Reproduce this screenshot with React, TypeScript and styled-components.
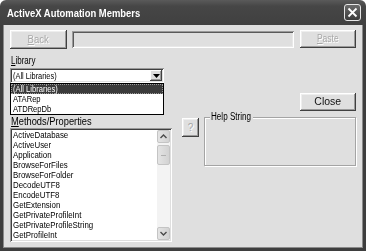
import React from 'react';
import styled, { createGlobalStyle } from 'styled-components';

const GlobalStyle = createGlobalStyle`
  html, body {
    margin: 0;
    padding: 0;
    background: #ffffff;
  }
  body {
    font-family: "Liberation Sans", Arial, sans-serif;
    font-size: 10px;
    color: #000;
  }
  * {
    box-sizing: border-box;
  }
`;

// the dialog font is a narrow bitmap face; squeeze Liberation Sans to its widths
const Txt = styled.span<{ $sx?: number; $origin?: string }>`
  display: inline-block;
  white-space: nowrap;
  transform: scaleX(${(p) => p.$sx ?? 1});
  transform-origin: ${(p) => p.$origin ?? 'left center'};
`;

const Window = styled.div`
  width: 366px;
  height: 251px;
  display: flex;
  flex-direction: column;
  overflow: hidden;
`;

const TitleBar = styled.div`
  height: 25px;
  flex: none;
  display: flex;
  align-items: center;
  justify-content: space-between;
  padding: 0 5px 0 7px;
  background: linear-gradient(#5a5a5a 0%, #464646 25%, #404040 100%);
  border-radius: 6px 6px 0 0;
`;

const Title = styled.span`
  font-weight: bold;
  font-size: 11.5px;
  color: #ffffff;
`;

const CloseX = styled.div`
  width: 17px;
  height: 17px;
  border: 1px solid #e6e6e6;
  border-radius: 3px;
  background: linear-gradient(#6a6a6a, #3c3c3c);
  display: flex;
  align-items: center;
  justify-content: center;
`;

const Body = styled.div`
  flex: 1;
  background: #dfdfdf;
  border: 3px solid #3e3e3e;
  border-top: 0;
  box-shadow: inset 1px 0 #8a8a8a, inset -1px -1px #8a8a8a;
  padding: 5px 7px 0 7px;
  display: flex;
  flex-direction: column;
`;

const TopRow = styled.div`
  display: flex;
  align-items: flex-start;
  height: 19px;
`;

const Button = styled.button<{ $w: number; $h?: number; $disabled?: boolean }>`
  width: ${(p) => p.$w}px;
  height: ${(p) => p.$h ?? 19}px;
  flex: none;
  border: none;
  padding: 0;
  margin: 0;
  background: #dfdfdf;
  box-shadow: inset -1px -1px #404040, inset 1px 1px #ffffff,
    inset -2px -2px #9a9a9a, inset 2px 2px #eeeeee;
  font-family: "Liberation Sans", Arial, sans-serif;
  font-size: 10px;
  line-height: 1;
  color: ${(p) => (p.$disabled ? '#a8a8a8' : '#111')};
  text-shadow: ${(p) => (p.$disabled ? '1px 1px #ffffff' : 'none')};
  display: flex;
  align-items: center;
  justify-content: center;
`;

const Field = styled.div`
  flex: 1;
  height: 17px;
  margin: 1px 6px 0 5px;
  background: #dfdfdf;
  box-shadow: inset 1px 1px #9a9a9a, inset -1px -1px #ffffff,
    inset 2px 2px #5a5a5a, inset -2px -2px #e8e8e8;
`;

const MainRow = styled.div`
  display: flex;
  flex: 1;
`;

const LeftCol = styled.div`
  width: 162px;
  flex: none;
  display: flex;
  flex-direction: column;
`;

const Label = styled.div<{ $top: number }>`
  font-size: 10px;
  line-height: 12px;
  height: 12px;
  margin-top: ${(p) => p.$top}px;
  padding-left: 1px;
`;

const ComboWrap = styled.div`
  position: relative;
  width: 154px;
  margin-top: 1px;
`;

const Combo = styled.div`
  height: 15px;
  background: #ffffff;
  box-shadow: inset 1px 1px #9a9a9a, inset -1px -1px #ffffff,
    inset 2px 2px #404040, inset -2px -2px #dfdfdf;
  display: flex;
  align-items: center;
  padding: 2px 2px 2px 3px;
`;

const ComboText = styled.span`
  flex: 1;
  font-size: 9.5px;
  line-height: 11px;
`;

const ArrowBtn = styled.div`
  width: 12px;
  height: 11px;
  background: #dfdfdf;
  box-shadow: inset -1px -1px #404040, inset 1px 1px #ffffff,
    inset -2px -2px #9a9a9a;
  display: flex;
  align-items: center;
  justify-content: center;
`;

const DropList = styled.div`
  position: absolute;
  top: 100%;
  left: 0;
  width: 100%;
  background: #ffffff;
  border: 1px solid #000;
  padding: 0;
`;

const DropItem = styled.div<{ $selected?: boolean }>`
  font-size: 9.5px;
  line-height: 10px;
  height: 10px;
  padding-left: 2px;
  background: ${(p) => (p.$selected ? '#3b3b3b' : 'transparent')};
  color: ${(p) => (p.$selected ? '#ffffff' : '#000')};
  outline: ${(p) => (p.$selected ? '1px dotted #9a9a9a' : 'none')};
  outline-offset: -1px;
`;

const ListBox = styled.div`
  height: 114px;
  background: #ffffff;
  box-shadow: inset 1px 1px #9a9a9a, inset -1px -1px #ffffff,
    inset 2px 2px #404040, inset -2px -2px #dfdfdf;
  padding: 2px;
  display: flex;
`;

const Items = styled.div`
  flex: 1;
  overflow: hidden;
  padding-left: 1px;
`;

const Item = styled.div`
  font-size: 9.5px;
  line-height: 10px;
  height: 10px;
`;

const ScrollBar = styled.div`
  width: 13px;
  flex: none;
  display: flex;
  flex-direction: column;
  background: #f3f3f3;
`;

const ScrollBtn = styled.div<{ $h: number; $gap?: number }>`
  height: ${(p) => p.$h}px;
  margin-top: ${(p) => p.$gap ?? 0}px;
  flex: none;
  background: linear-gradient(90deg, #e4e4e4, #d2d2d2);
  border: 1px solid #c4c4c4;
  border-radius: 2px;
  display: flex;
  align-items: center;
  justify-content: center;
`;

const Track = styled.div`
  flex: 1;
`;

const Grip = styled.div`
  width: 5px;
  height: 1px;
  background: #b0b0b0;
`;

const RightCol = styled.div`
  flex: 1;
  display: flex;
  flex-direction: column;
`;

const CloseRow = styled.div`
  display: flex;
  justify-content: flex-end;
  margin-top: 44px;
`;

const HelpRow = styled.div`
  display: flex;
  margin-top: 6px;
`;

const HelpButtonSlot = styled.div`
  margin: 1px 5px 0 10px;
`;

const Group = styled.div`
  position: relative;
  flex: 1;
  height: 49px;
  border: 1px solid #a4a4a4;
  box-shadow: inset 1px 1px #ffffff, 1px 1px #ffffff;
`;

const Legend = styled.span`
  position: absolute;
  top: -7px;
  left: 5px;
  width: 43px;
  padding: 0 1px;
  background: #dfdfdf;
  font-size: 10px;
  line-height: 12px;
`;

const methods = [
  'ActiveDatabase',
  'ActiveUser',
  'Application',
  'BrowseForFiles',
  'BrowseForFolder',
  'DecodeUTF8',
  'EncodeUTF8',
  'GetExtension',
  'GetPrivateProfileInt',
  'GetPrivateProfileString',
  'GetProfileInt',
];

const libraries = ['(All Libraries)', 'ATARep', 'ATDRepDb'];

const Chevron: React.FC<{ up?: boolean }> = ({ up }) => (
  <svg width="7" height="5" viewBox="0 0 7 5">
    <path
      d={up ? 'M0.5 4 L3.5 1 L6.5 4' : 'M0.5 1 L3.5 4 L6.5 1'}
      fill="none"
      stroke="#4a4a4a"
      strokeWidth="1.4"
    />
  </svg>
);

const App: React.FC = () => {
  return (
    <>
      <GlobalStyle />
      <Window>
        <TitleBar>
          <Title>
            <Txt $sx={0.82}>ActiveX Automation Members</Txt>
          </Title>
          <CloseX>
            <svg width="11" height="11" viewBox="0 0 11 11">
              <path d="M1.5 1.5 L9.5 9.5 M9.5 1.5 L1.5 9.5" stroke="#ffffff" strokeWidth="1.8" />
            </svg>
          </CloseX>
        </TitleBar>
        <Body>
          <TopRow>
            <Button $w={57} $disabled>
              <Txt $sx={0.95} $origin="center">
                <u>B</u>ack
              </Txt>
            </Button>
            <Field />
            <Button $w={56} $h={18} $disabled>
              <Txt $sx={0.85} $origin="center">
                <u>P</u>aste
              </Txt>
            </Button>
          </TopRow>
          <MainRow>
            <LeftCol>
              <Label $top={6}>
                <Txt $sx={0.8}>
                  <u>L</u>ibrary
                </Txt>
              </Label>
              <ComboWrap>
                <Combo>
                  <ComboText>
                    <Txt $sx={0.78}>(All Libraries)</Txt>
                  </ComboText>
                  <ArrowBtn>
                    <svg width="7" height="4" viewBox="0 0 7 4">
                      <path d="M0 0 H7 L3.5 4 Z" fill="#000" />
                    </svg>
                  </ArrowBtn>
                </Combo>
                <DropList>
                  {libraries.map((lib, i) => (
                    <DropItem key={lib} $selected={i === 0}>
                      <Txt $sx={0.8}>{lib}</Txt>
                    </DropItem>
                  ))}
                </DropList>
              </ComboWrap>
              <Label $top={33}>
                <Txt $sx={0.93}>
                  <u>M</u>ethods/Properties
                </Txt>
              </Label>
              <ListBox>
                <Items>
                  {methods.map((m) => (
                    <Item key={m}>
                      <Txt $sx={0.83}>{m}</Txt>
                    </Item>
                  ))}
                </Items>
                <ScrollBar>
                  <ScrollBtn $h={13}>
                    <Chevron up />
                  </ScrollBtn>
                  <ScrollBtn $h={20} $gap={2}>
                    <Grip />
                  </ScrollBtn>
                  <Track />
                  <ScrollBtn $h={13}>
                    <Chevron />
                  </ScrollBtn>
                </ScrollBar>
              </ListBox>
            </LeftCol>
            <RightCol>
              <CloseRow>
                <Button $w={56} $h={18}>
                  <Txt $sx={1.05} $origin="center">
                    Close
                  </Txt>
                </Button>
              </CloseRow>
              <HelpRow>
                <HelpButtonSlot>
                  <Button $w={17} $h={19} $disabled>
                    ?
                  </Button>
                </HelpButtonSlot>
                <Group>
                  <Legend>
                    <Txt $sx={0.81}>Help String</Txt>
                  </Legend>
                </Group>
              </HelpRow>
            </RightCol>
          </MainRow>
        </Body>
      </Window>
    </>
  );
};

export default App;
